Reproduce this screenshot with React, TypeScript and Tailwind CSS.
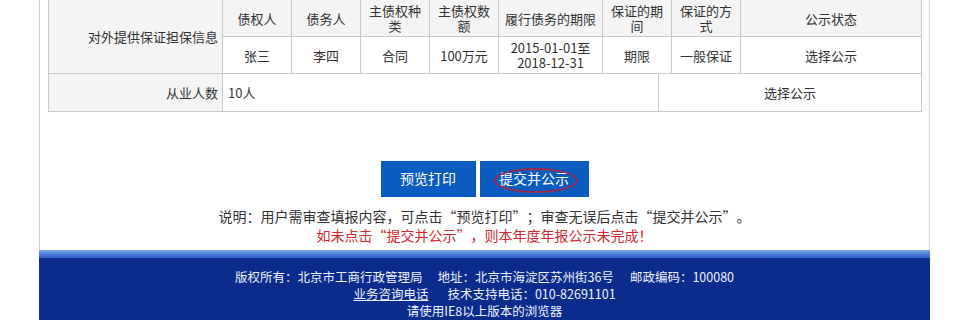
const HEADERS = ['债权人', '债务人', '主债权种\n类', '主债权数\n额', '履行债务的期限', '保证的期\n间', '保证的方\n式', '公示状态'];
const ROW = ['张三', '李四', '合同', '100万元', '2015-01-01至\n2018-12-31', '期限', '一般保证', '选择公示'];
const COLS = [174, 69, 69, 69, 69, 104, 69, 69, 181];

const cell = 'border border-[#c9c9c9] px-[4px] text-center whitespace-pre-line';

// full-width quotation marks, like the original page's font draws them
function Q({ children }: { children: string }) {
  return (
    <>
      <span className="inline-block w-[14px] text-right">“</span>
      {children}
      <span className="inline-block w-[14px] text-left">”</span>
    </>
  );
}

export default function App() {
  return (
    <div className="min-h-[320px] bg-white font-['Noto_Sans_CJK_SC','Noto_Sans',sans-serif] text-[#333]">
      <div className="ml-[39px] w-[891px]">
        {/* form body */}
        <div className="border-x border-[#d4d4d4] px-2 pb-[5px]">
          <table className="-mt-px w-full table-fixed border-collapse text-[13px] leading-[15px]">
            <colgroup>
              {COLS.map((w, i) => (
                <col key={i} style={{ width: w }} />
              ))}
            </colgroup>
            <tbody>
              <tr className="h-[37px]">
                <td rowSpan={2} className="border border-[#c9c9c9] bg-[#f4f4f4] px-[4px] text-right">
                  对外提供保证担保信息
                </td>
                {HEADERS.map(h => (
                  <td key={h} className={`${cell} bg-[#f4f4f4]`}>{h}</td>
                ))}
              </tr>
              <tr className="h-[37px]">
                {ROW.map((v, i) => (
                  <td key={i} className={cell}>{v}</td>
                ))}
              </tr>
            </tbody>
          </table>
          <table className="w-full table-fixed border-collapse text-[13px] leading-[15px]">
            <colgroup>
              <col style={{ width: 174 }} />
              <col style={{ width: 436 }} />
              <col style={{ width: 263 }} />
            </colgroup>
            <tbody>
              <tr className="h-[37px]">
                <td className="border border-t-0 border-[#c9c9c9] bg-[#f4f4f4] px-[4px] text-right">从业人数</td>
                <td className="border border-t-0 border-[#c9c9c9] px-[5px] text-left">10人</td>
                <td className="border border-t-0 border-[#c9c9c9] px-[4px] text-center">选择公示</td>
              </tr>
            </tbody>
          </table>

          {/* actions */}
          <div className="mt-[49px] flex justify-center gap-[4px] text-[14px] text-white">
            <button type="button" className="h-[36px] w-[95px] bg-[#0b5cc1]">预览打印</button>
            <button type="button" className="relative h-[36px] w-[109px] bg-[#0b5cc1]">
              提交并公示
              <span className="absolute left-[14px] top-[7px] h-[25px] w-[84px] rounded-[50%] border-2 border-[#9a2a4c]" />
            </button>
          </div>
          <div className="mt-[10px] text-center text-[14px] leading-[19px]">
            <p>
              说明：用户需审查填报内容，可点击<Q>预览打印</Q>；审查无误后点击<Q>提交并公示</Q>。
            </p>
            <p className="text-[#d3282d]">
              如未点击<Q>提交并公示</Q>，则本年度年报公示未完成！
            </p>
          </div>
        </div>

        {/* footer */}
        <div className="h-[8px] bg-gradient-to-b from-[#7ba4ea] to-[#2b5ccb]" />
        <div className="flex flex-col items-center bg-[#0b2b8d] pt-[10px] pb-[8px] text-[12.5px] leading-[17px] text-[#eef2fc]">
          <div className="flex h-[17px] gap-[15px]">
            <span>版权所有：北京市工商行政管理局</span>
            <span>地址：北京市海淀区苏州街36号</span>
            <span className="ml-px">邮政编码：100080</span>
          </div>
          <div className="flex h-[17px] gap-[19px]">
            <span className="underline">业务咨询电话</span>
            <span>技术支持电话：010-82691101</span>
          </div>
          <div className="h-[17px]">请使用IE8以上版本的浏览器</div>
        </div>
      </div>
    </div>
  );
}
